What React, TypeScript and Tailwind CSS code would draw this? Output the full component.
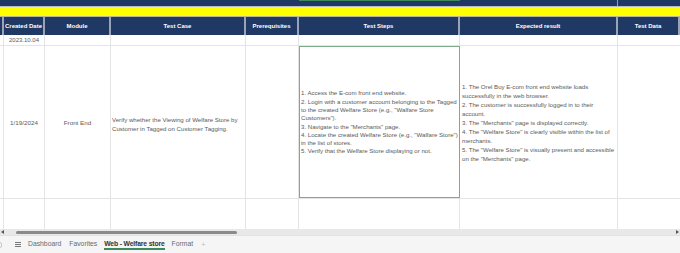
const cols = "grid grid-cols-[4px_41px_66px_135px_53px_161px_158px_1fr]";

const headers = ["", "Created Date", "Module", "Test Case", "Prerequisites", "Test Steps", "Expected result", "Test Data"];

const steps = [
  "1. Access the E-com front end website.",
  "2. Login with a customer account belonging to the Tagged",
  "to the created Welfare Store (e.g., \"Walfare Store",
  "Customers\").",
  "3. Navigate to the \"Merchants\" page.",
  "4. Locate the created Welfare Store (e.g., \"Walfare Store\")",
  "in the list of stores.",
  "5. Verify that the Welfare Store displaying or not.",
];

const expected = [
  "1. The Orel Buy E-com front end website loads",
  "successfully in the web browser.",
  "2. The customer is successfully logged in to their",
  "account.",
  "3. The \"Merchants\" page is displayed correctly.",
  "4. The \"Welfare Store\" is clearly visible within the list of",
  "merchants.",
  "5. The \"Welfare Store\" is visually present and accessible",
  "on the \"Merchants\" page.",
];

function Lines({ items, lh }: { items: string[]; lh: string }) {
  return (
    <div className={`flex flex-col ${lh}`}>
      {items.map((l, i) => (
        <span key={i} className="whitespace-nowrap">
          {l}
        </span>
      ))}
    </div>
  );
}

export default function App() {
  return (
    <main
      className="w-[680px] h-[253px] overflow-hidden bg-white flex flex-col text-[#5a5a5a]"
      style={{ fontFamily: '"Liberation Sans", Arial, sans-serif' }}
    >
      {/* title band */}
      <div className={`${cols} h-[7px] bg-[#1f3864] border-b border-[#b8bcc4]`}>
        <div className="col-span-5" />
        <div className="border-t border-[#3c8a5a]" />
        <div className="border-r border-[#9aa1ad]" />
        <div />
      </div>
      <div className="h-[10px] bg-[#ffff00] border-b border-[#b8b8a0]" />

      {/* header */}
      <div className={`${cols} h-[18px] bg-[#1f3864]`}>
        {headers.map((h, i) => (
          <div
            key={i}
            className="flex items-center justify-center border-r-2 border-[#9aa3b5] text-white font-bold text-[6px] whitespace-nowrap"
          >
            {h}
          </div>
        ))}
      </div>

      {/* date row */}
      <div className={`${cols} h-[11px] border-b border-[#e4e4e4] text-[6px]`}>
        <div className="border-r border-[#e4e4e4]" />
        <div className="flex items-center justify-center border-r border-[#e4e4e4]">2023.10.04</div>
        <div className="border-r border-[#e4e4e4]" />
        <div className="border-r border-[#e4e4e4]" />
        <div className="border-r border-[#e4e4e4]" />
        <div className="border-r border-[#e4e4e4]" />
        <div className="border-r border-[#e4e4e4]" />
        <div />
      </div>

      {/* main row */}
      <div className={`${cols} h-[153px] border-b border-[#e4e4e4] text-[6.1px]`}>
        <div className="border-r border-[#e4e4e4]" />
        <div className="flex items-center justify-center border-r border-[#e4e4e4] pt-[2px] text-[6.25px]">1/19/2024</div>
        <div className="flex items-center justify-center border-r border-[#e4e4e4] pt-[2px] text-[6.25px]">Front End</div>
        <div className="flex items-center pl-[1px] pt-[3px] border-r border-[#e4e4e4]">
          <Lines lh="leading-[9px]" items={["Verify whether the Viewing of Welfare Store by", "Customer in Tagged on Customer Tagging."]} />
        </div>
        <div className="border-r border-[#e4e4e4]" />
        <div className="flex items-center pl-[1px] pt-[1px] border border-[#7fab88]">
          <Lines lh="leading-[8.3px]" items={steps} />
        </div>
        <div className="flex items-center pl-[2px] pt-[3px] border-r border-[#e4e4e4]">
          <Lines lh="leading-[8.9px]" items={expected} />
        </div>
        <div />
      </div>

      {/* empty row */}
      <div className={`${cols} flex-1`}>
        <div className="border-r border-[#e4e4e4]" />
        <div className="border-r border-[#e4e4e4]" />
        <div className="border-r border-[#e4e4e4]" />
        <div className="border-r border-[#e4e4e4]" />
        <div className="border-r border-[#e4e4e4]" />
        <div className="border-r border-[#e4e4e4]" />
        <div className="border-r border-[#e4e4e4]" />
        <div />
      </div>

      {/* horizontal scrollbar */}
      <div className="h-[6px] bg-[#e8e8e8] flex items-center px-[1px] gap-[12px]">
        <span className="w-0 h-0 border-y-[2px] border-y-transparent border-r-[3px] border-r-[#555]" />
        <span className="w-[221px] h-[3px] rounded-full bg-[#8a8a8a]" />
        <span className="flex-1" />
        <span className="w-0 h-0 border-y-[2px] border-y-transparent border-l-[3px] border-l-[#555]" />
      </div>

      {/* sheet tabs */}
      <div className="h-[18px] bg-[#f5f5f5] border-t border-[#e2e2e2] flex items-center text-[6.8px] text-[#6b6b6b]">
        <span className="w-[4px] h-[6px] border border-[#c8c8c8] rounded-full -ml-[2px] mr-[13px]" />
        <span className="flex flex-col gap-[1px] w-[6px] mr-[7px]">
          <span className="h-px bg-[#777]" />
          <span className="h-px bg-[#777]" />
          <span className="h-px bg-[#777]" />
        </span>
        <span className="mr-[8px]">Dashboard</span>
        <span className="mr-[7px]">Favorites</span>
        <span className="relative font-bold text-[#333] mr-[7px] h-full flex items-center tracking-[-0.15px]">
          Web - Welfare store
          <span className="absolute left-0 right-0 bottom-[3px] h-[2px] bg-[#3e8a5e]" />
        </span>
        <span className="mr-[8px]">Format</span>
        <span className="text-[#c0c0c0] text-[8px]">+</span>
      </div>
    </main>
  );
}
